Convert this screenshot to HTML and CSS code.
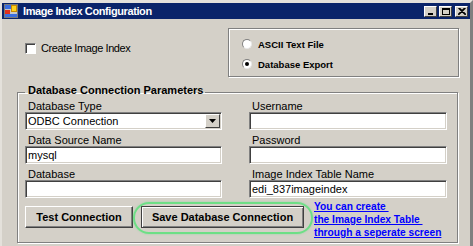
FILE: index.html
```html
<!DOCTYPE html>
<html lang="en">
<head>
  <meta charset="UTF-8">
  <title>Image Index Configuration</title>
  <link rel="stylesheet" href="styles.css">
</head>
<body>
  <div class="window">
    <div class="titlebar">
      <svg class="app-icon" width="14" height="14" viewBox="0 0 14 14">
        <rect x="0.5" y="0.5" width="13" height="13" fill="#c8c8c8" stroke="#7a7a7a"/>
        <rect x="1" y="1" width="6" height="4" fill="#3b6fe0"/>
        <rect x="7.5" y="1.5" width="5" height="6" fill="#ffd21a" stroke="#c88a00"/>
        <rect x="1" y="6" width="5" height="4" fill="#e0301c"/>
        <rect x="1" y="10" width="12" height="3" fill="#3b6fe0"/>
      </svg>
      <span class="title">Image Index Configuration</span>
      <div class="caption-btns">
        <span class="cap-btn">
          <svg width="8" height="7" viewBox="0 0 8 7"><rect x="1" y="5" width="5" height="2" fill="#000"/></svg>
        </span>
        <span class="cap-btn">
          <svg width="8" height="7" viewBox="0 0 8 7"><rect x="0.5" y="0.5" width="7" height="6" fill="none" stroke="#000"/><rect x="0" y="0" width="8" height="2" fill="#000"/></svg>
        </span>
        <span class="cap-btn cap-close">
          <svg width="8" height="7" viewBox="0 0 8 7"><path d="M0.5 0 L7.5 7 M7.5 0 L0.5 7 M1.5 0 L8 6.5 M6.5 0 L0 6.5" stroke="#000" stroke-width="1.1"/></svg>
        </span>
      </div>
    </div>

    <div class="client">
      <div class="top-row">
        <label class="check"><span class="checkbox"></span>Create Image Index</label>
        <div class="radio-box">
          <label class="radio"><span class="radio-dot"></span>ASCII Text File</label>
          <label class="radio"><span class="radio-dot checked"></span>Database Export</label>
        </div>
      </div>

      <fieldset class="db-group">
        <legend>Database Connection Parameters</legend>
        <div class="fields">
          <div class="field">
            <div class="label">Database Type</div>
            <div class="combo">
              <span class="combo-value">ODBC Connection</span>
              <span class="combo-btn">
                <svg width="7" height="4" viewBox="0 0 7 4"><polygon points="0,0 7,0 3.5,4" fill="#000"/></svg>
              </span>
            </div>
          </div>
          <div class="field">
            <div class="label">Username</div>
            <div class="textbox"></div>
          </div>
          <div class="field">
            <div class="label">Data Source Name</div>
            <div class="textbox">mysql</div>
          </div>
          <div class="field">
            <div class="label">Password</div>
            <div class="textbox"></div>
          </div>
          <div class="field">
            <div class="label">Database</div>
            <div class="textbox"></div>
          </div>
          <div class="field">
            <div class="label">Image Index Table Name</div>
            <div class="textbox">edi_837imageindex</div>
          </div>
        </div>

        <div class="actions">
          <button class="btn btn-test">Test Connection</button>
          <button class="btn btn-save">Save Database Connection</button>
          <a class="create-link" href="#">You can create&nbsp;<br>the Image Index Table&nbsp;<br>through a seperate screen</a>
        </div>
      </fieldset>
    </div>
  </div>
</body>
</html>
```

FILE: styles.css
```css
body {
  margin: 0;
  background-color: #fff;
  font-family: "Liberation Sans", Arial, sans-serif;
  font-size: 11px;
  color: #000;
}

/* Window frame */
.window {
  width: 473px;
  height: 246px;
  box-sizing: border-box;
  overflow: hidden;
  background-color: #d4d0c8;
  border-style: solid;
  border-width: 3px 3px 0 2px;
  border-color: #e4e1db #808080 #808080 #e4e1db;
}

.titlebar {
  height: 16px;
  display: flex;
  align-items: center;
  padding: 0 2px;
  background-color: #0a246a;
  color: #fff;
}

.app-icon {
  flex: none;
  margin-right: 5px;
}

.title {
  font-weight: bold;
  font-size: 11px;
  letter-spacing: -0.4px;
  white-space: nowrap;
}

.caption-btns {
  margin-left: auto;
  display: flex;
  gap: 2px;
}

.cap-btn {
  width: 13px;
  height: 11px;
  box-sizing: border-box;
  display: flex;
  align-items: center;
  justify-content: center;
  background-color: #d4d0c8;
  border: 1px solid;
  border-color: #fff #404040 #404040 #fff;
}

.cap-close {
  margin-left: 1px;
}

/* Client area */
.client {
  padding: 9px 11px 0 15px;
}

.top-row {
  display: flex;
  align-items: flex-start;
  height: 49px;
}

.check {
  display: flex;
  align-items: center;
  gap: 5px;
  margin: 15px 0 0 8px;
  letter-spacing: -0.4px;
  line-height: 11px;
}

.checkbox {
  width: 11px;
  height: 11px;
  box-sizing: border-box;
  background-color: #fff;
  border: 1px solid;
  border-color: #808080 #fff #fff #808080;
  box-shadow: inset 1px 1px #404040;
}

.radio-box {
  margin-left: auto;
  width: 231px;
  height: 49px;
  box-sizing: border-box;
  padding: 5px 0 0 13px;
  border: 1px solid #808080;
  box-shadow: inset 1px 1px #fff, 1px 1px #fff;
}

.radio {
  display: flex;
  align-items: center;
  gap: 6px;
  height: 20px;
  font-weight: bold;
  font-size: 9.5px;
}

.radio-dot {
  position: relative;
  width: 10px;
  height: 10px;
  box-sizing: border-box;
  border-radius: 50%;
  background-color: #fff;
  border: 1px solid;
  border-color: #808080 #e8e8e8 #e8e8e8 #808080;
}

.radio-dot.checked::after {
  content: "";
  position: absolute;
  left: 2px;
  top: 2px;
  width: 4px;
  height: 4px;
  border-radius: 50%;
  background-color: #000;
}

/* Database group */
.db-group {
  margin: 7px 1px 0 0;
  padding: 0 10px 3px 7px;
  min-width: 0;
  border: 1px solid #808080;
  box-shadow: inset 1px 1px #fff, 1px 1px #fff;
}

.db-group legend {
  padding: 0 2px 4px 3px;
  font-weight: bold;
  font-size: 11px;
  line-height: 13px;
}

.fields {
  display: grid;
  grid-template-columns: 197px 198px;
  column-gap: 27px;
  row-gap: 4px;
  margin-top: -1px;
}

.label {
  height: 12px;
  line-height: 12px;
  padding-left: 3px;
  white-space: nowrap;
}

.textbox,
.combo {
  height: 18px;
  box-sizing: border-box;
  background-color: #fff;
  border: 1px solid;
  border-color: #808080 #fff #fff #808080;
  box-shadow: inset 1px 1px #404040, inset -1px -1px #d4d0c8;
  line-height: 16px;
  padding: 0 2px;
  white-space: nowrap;
}

.combo {
  display: flex;
  padding: 1px 1px 1px 2px;
  line-height: 14px;
}

.combo-value {
  flex: 1;
}

.combo-btn {
  width: 15px;
  box-sizing: border-box;
  display: flex;
  align-items: center;
  justify-content: center;
  background-color: #d4d0c8;
  border: 1px solid;
  border-color: #fff #404040 #404040 #fff;
}

/* Buttons row */
.actions {
  display: flex;
  align-items: flex-start;
  margin-top: 2px;
}

.btn {
  height: 22px;
  margin-top: 6px;
  padding: 0;
  box-sizing: border-box;
  font-family: "Liberation Sans", Arial, sans-serif;
  font-weight: bold;
  font-size: 11px;
  color: #000;
  background-color: #d4d0c8;
  border: 1px solid;
  border-color: #fff #404040 #404040 #fff;
  box-shadow: inset -1px -1px #808080;
}

.btn-test {
  width: 108px;
}

.btn-save {
  position: relative;
  width: 163px;
  margin-left: 8px;
  border-color: #404040;
  box-shadow: inset 1px 1px #fff, inset -1px -1px #808080;
}

/* green highlight drawn around the save button */
.btn-save::after {
  content: "";
  position: absolute;
  left: -9px;
  right: -10px;
  top: -5px;
  bottom: -7px;
  border: 2px solid #6ddf86;
  border-radius: 16px;
  box-shadow: 0 0 2px rgba(110, 225, 140, 0.7);
  pointer-events: none;
}

.create-link {
  margin-left: 10px;
  font-weight: bold;
  font-size: 10.2px;
  line-height: 13px;
  color: #0000ff;
  text-decoration: underline;
  white-space: nowrap;
}
```
